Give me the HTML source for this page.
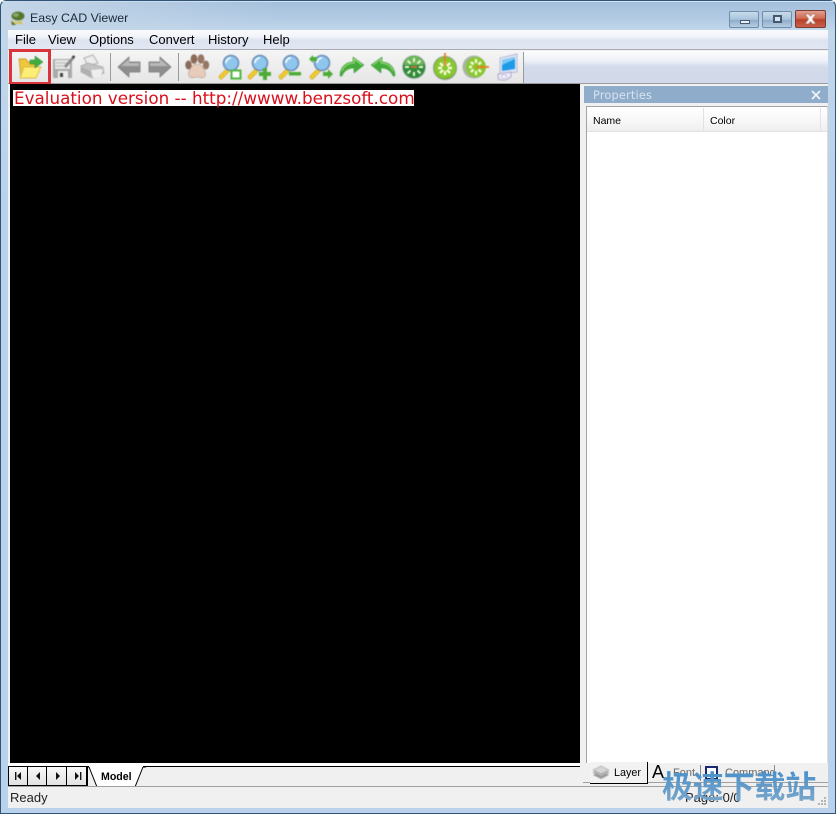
<!DOCTYPE html>
<html><head><meta charset="utf-8">
<style>
*{box-sizing:border-box;margin:0;padding:0}
html,body{width:836px;height:814px;overflow:hidden;background:#fff}
body{position:relative;font-family:"Liberation Sans",sans-serif;color:#000}
.a{position:absolute}
.t{position:absolute;white-space:nowrap}
svg{position:absolute;overflow:visible}
svg.i{filter:blur(.45px)}
</style></head><body>
<div class="a" style="left:0;top:0;width:836px;height:814px;background:linear-gradient(180deg,#a3bfdc 0,#b5cde5 20px,#c3d7ea 30px,#b9d1ea 200px,#b9d1ea 100%);border:1px solid #2f5478;border-radius:6px 6px 0 0"></div>
<div class="a" style="left:1px;top:1px;width:834px;height:1px;background:#d5e3f0"></div>
<div class="a" style="left:0;top:0;width:280px;height:30px;background:linear-gradient(90deg,#c4d6e8,rgba(196,214,232,0));border-radius:6px 0 0 0;margin:1px"></div>

<!-- app icon and title -->
<svg class="i" style="left:10px;top:10px" width="17" height="16" viewBox="0 0 17 16"><ellipse cx="8" cy="6" rx="6.5" ry="4.5" fill="#55752f"/><ellipse cx="6" cy="5" rx="3" ry="2" fill="#8aa765"/><path d="M1 8C4 13 8 13 11 10L13 14H3Z" fill="#d3c263"/><path d="M1 11L6 15H2Z" fill="#4f6a2f"/></svg>
<div class="t" style="left:30px;top:11px;font-size:12.4px;color:#1c2a38">Easy CAD Viewer</div>

<!-- caption buttons -->
<div class="a" style="left:729px;top:11px;width:30px;height:17px;border:1px solid #6f8dab;border-radius:2px;background:linear-gradient(180deg,#c9dbeb 0,#a8c3dc 50%,#8fadca 55%,#b6cde2 100%)"></div>
<div class="a" style="left:740px;top:20px;width:10px;height:4px;background:#e8eff6;border:1px solid #44586e"></div>
<div class="a" style="left:762px;top:11px;width:30px;height:17px;border:1px solid #6f8dab;border-radius:2px;background:linear-gradient(180deg,#c9dbeb 0,#a8c3dc 50%,#8fadca 55%,#b6cde2 100%)"></div>
<div class="a" style="left:773px;top:15px;width:9px;height:8px;background:#d7e3ee;border:2px solid #44586e"></div>
<div class="a" style="left:795px;top:10px;width:31px;height:18px;border:1px solid #7b3b30;border-radius:2px;background:linear-gradient(180deg,#e0a090 0,#cf6b55 45%,#b9412a 55%,#c9604a 100%)"></div>
<svg class="i" style="left:804px;top:14px" width="13" height="10" viewBox="0 0 13 10"><path d="M1 0H4.5L6.5 2.5L8.5 0H12L8.3 5L12 10H8.5L6.5 7.5L4.5 10H1L4.7 5Z" fill="#fff" stroke="#6b2a20" stroke-width=".4"/></svg>

<!-- client area -->
<div class="a" style="left:8px;top:30px;width:820px;height:778px;background:#f0f0f0"></div>

<!-- menu -->
<div class="a" style="left:8px;top:30px;width:820px;height:20px;background:linear-gradient(180deg,#fafbfd 0,#f1f3f9 35%,#dde3f0 50%,#e2e7f3 100%)"></div>
<div class="a" style="left:8px;top:49px;width:820px;height:1px;background:#a9adb3"></div>
<div class="t" style="left:15px;top:32px;font-size:13px;line-height:16px">File</div>
<div class="t" style="left:48px;top:32px;font-size:13px;line-height:16px">View</div>
<div class="t" style="left:89px;top:32px;font-size:13px;line-height:16px">Options</div>
<div class="t" style="left:149px;top:32px;font-size:13px;line-height:16px">Convert</div>
<div class="t" style="left:208px;top:32px;font-size:13px;line-height:16px">History</div>
<div class="t" style="left:263px;top:32px;font-size:13px;line-height:16px">Help</div>

<!-- toolbar -->
<div class="a" style="left:8px;top:50px;width:820px;height:33px;background:#f0f0f0"></div>
<div class="a" style="left:8px;top:50px;width:515px;height:33px;background:linear-gradient(180deg,#f5f5f5,#e6e6e6)"></div>
<div class="a" style="left:524px;top:51px;width:304px;height:32px;background:linear-gradient(180deg,#fbfcfd 0,#eef1f8 30%,#d3daea 50%,#d2d9ea 100%)"></div>
<div class="a" style="left:523px;top:52px;width:1px;height:31px;background:#9a9a9a"></div>
<div class="a" style="left:8px;top:83px;width:820px;height:1px;background:#9b9b9b"></div>
<div class="a" style="left:110px;top:53px;width:1px;height:28px;background:#9a9a9a"></div>
<div class="a" style="left:178px;top:53px;width:1px;height:28px;background:#9a9a9a"></div>

<!-- open (red highlight) -->
<div class="a" style="left:9px;top:49px;width:42px;height:36px;border:3px solid #d9343c"></div>
<svg class="i" style="left:18px;top:54px" width="26" height="26" viewBox="0 0 26 26">
<path d="M1 5H8L10 8H19V14L17 24H3Z" fill="#efc63c" stroke="#c9a030" stroke-width=".9"/><path d="M6 13H23L18 24H2Z" fill="#fdee78" stroke="#dcb83e" stroke-width=".9"/>
<path d="M12 6H17V2L25 8L17 14V10H12Z" fill="#3fae3f" stroke="#2d7d2d" stroke-width=".5"/></svg>
<!-- save gray -->
<svg class="i" style="left:52px;top:54px" width="24" height="26" viewBox="0 0 24 26">
<rect x="1" y="5" width="19" height="19" fill="#a9a9a9"/><rect x="3" y="6" width="15" height="9" fill="#e4e4e4"/><path d="M4 9H15M4 12H13" stroke="#bbb"/><rect x="6" y="17" width="10" height="7" fill="#ececec"/><rect x="8" y="19" width="3" height="4" fill="#444"/>
<path d="M12 12L20 3L22 5L14 14Z" fill="#8a8a8a"/><circle cx="21.5" cy="3" r="1.5" fill="#444"/></svg>
<!-- print gray -->
<svg class="i" style="left:79px;top:54px" width="28" height="26" viewBox="0 0 28 26">
<path d="M5 4L14 1L19 9L9 12Z" fill="#ececec" stroke="#b0b0b0"/><path d="M2 12L9 9L24 13L25 19L14 24L2 18Z" fill="#c2c2c2" stroke="#a5a5a5" stroke-width=".7"/><path d="M12 16L24 15L22 22L14 24Z" fill="#eeeeee"/><path d="M2 13L12 17V24L2 18Z" fill="#b0b0b0"/></svg>
<!-- back / forward gray -->
<svg class="i" style="left:117px;top:55px" width="24" height="24" viewBox="0 0 24 24"><path d="M1 12L12 2V7H23V17H12V22Z" fill="#8e8e8e" stroke="#777" stroke-width=".7"/><path d="M3 12L12 4V8H22V11H5Z" fill="#b9b9b9"/></svg>
<svg class="i" style="left:148px;top:55px" width="24" height="24" viewBox="0 0 24 24"><path d="M23 12L12 2V7H1V17H12V22Z" fill="#8e8e8e" stroke="#777" stroke-width=".7"/><path d="M21 12L12 4V8H2V11H19Z" fill="#b9b9b9"/></svg>
<!-- paw -->
<svg class="i" style="left:184px;top:53px" width="26" height="28" viewBox="0 0 26 28">
<ellipse cx="4.5" cy="12" rx="3.2" ry="4.5" fill="#8a6a58"/><ellipse cx="10" cy="6" rx="3.4" ry="4.8" fill="#8a6a58"/><ellipse cx="17" cy="6" rx="3.4" ry="4.8" fill="#967664"/><ellipse cx="22" cy="12" rx="3.2" ry="4.5" fill="#967664"/>
<path d="M13 11C18 11 23 19 21 23C19 26 16 24 13 24C10 24 7 26 5 23C3 19 8 11 13 11Z" fill="#e8ccbb" stroke="#b39582" stroke-width=".6"/></svg>
<!-- zoom icons -->
<svg class="i" style="left:217px;top:54px" width="26" height="27" viewBox="0 0 26 27">
<path d="M2 22L10 14L13 17L5 25Q2 26 2 22Z" fill="#efc92c" stroke="#b8961a" stroke-width=".5"/><circle cx="14" cy="9" r="7.5" fill="#8fc6ee" stroke="#6b8fb8" stroke-width="1.6"/><path d="M9 9A5 5 0 0 1 14 4" stroke="#fff" stroke-width="1.6" fill="none"/>
<rect x="14.5" y="16.5" width="9" height="8" fill="#fff" stroke="#4fb83c" stroke-width="2"/></svg>
<svg class="i" style="left:246px;top:54px" width="26" height="27" viewBox="0 0 26 27">
<path d="M2 22L10 14L13 17L5 25Q2 26 2 22Z" fill="#efc92c" stroke="#b8961a" stroke-width=".5"/><circle cx="14" cy="9" r="7.5" fill="#8fc6ee" stroke="#6b8fb8" stroke-width="1.6"/><path d="M9 9A5 5 0 0 1 14 4" stroke="#fff" stroke-width="1.6" fill="none"/>
<path d="M17 14H21V18H25V22H21V26H17V22H13V18H17Z" fill="#4dac37"/></svg>
<svg class="i" style="left:277px;top:54px" width="26" height="27" viewBox="0 0 26 27">
<path d="M2 22L10 14L13 17L5 25Q2 26 2 22Z" fill="#efc92c" stroke="#b8961a" stroke-width=".5"/><circle cx="14" cy="9" r="7.5" fill="#8fc6ee" stroke="#6b8fb8" stroke-width="1.6"/><path d="M9 9A5 5 0 0 1 14 4" stroke="#fff" stroke-width="1.6" fill="none"/>
<rect x="12" y="18" width="12" height="3.5" fill="#4dac37"/></svg>
<svg class="i" style="left:308px;top:54px" width="26" height="27" viewBox="0 0 26 27">
<path d="M2 22L10 14L13 17L5 25Q2 26 2 22Z" fill="#efc92c" stroke="#b8961a" stroke-width=".5"/><circle cx="14" cy="9" r="7.5" fill="#8fc6ee" stroke="#6b8fb8" stroke-width="1.6"/><path d="M9 9A5 5 0 0 1 14 4" stroke="#fff" stroke-width="1.6" fill="none"/>
<path d="M1 5L5 1L5 3H9V7H5V9Z" fill="#4dac37"/><path d="M25 20L20 15V18H15V22H20V25Z" fill="#4dac37"/></svg>
<!-- redo / undo -->
<svg class="i" style="left:339px;top:55px" width="26" height="24" viewBox="0 0 26 24"><path d="M1 21C1 12 7 7 14 7V2L25 10L15 18V13C9 13 5 16 3 21Z" fill="#42ad38" stroke="#2f8a2c" stroke-width=".5"/><path d="M3 16C5 11 9 8 15 8V4L23 10" stroke="#a4e07e" stroke-width="1" fill="none"/></svg>
<svg class="i" style="left:370px;top:55px" width="26" height="24" viewBox="0 0 26 24"><path d="M25 21C25 12 19 7 12 7V2L1 10L11 18V13C17 13 21 16 23 21Z" fill="#42ad38" stroke="#2f8a2c" stroke-width=".5"/><path d="M23 16C21 11 17 8 11 8V4L3 10" stroke="#a4e07e" stroke-width="1" fill="none"/></svg>
<!-- green wheels -->
<svg class="i" style="left:402px;top:55px" width="24" height="24" viewBox="0 0 24 24"><circle cx="12" cy="12" r="11.5" fill="#2f8a3c" stroke="#a9b5ac" stroke-width=".8"/><path d="M2 10A10 9 0 0 1 22 10Z" fill="#6cb65a"/><g stroke="#eef8d4" stroke-width="2"><path d="M12 3V7M12 17V21M3 12H7M17 12H21M5.6 5.6L8.5 8.5M15.5 15.5L18.4 18.4M18.4 5.6L15.5 8.5M8.5 15.5L5.6 18.4"/></g><path d="M9 12H15" stroke="#e8742c" stroke-width="1.6"/></svg>
<svg class="i" style="left:433px;top:53px" width="24" height="27" viewBox="0 0 24 27"><circle cx="12" cy="15" r="11.5" fill="#86c82e" stroke="#8c9a80" stroke-width="1"/><path d="M3 21A11.5 11.5 0 0 0 22 20A12 12 0 0 1 3 21Z" fill="#4a7a28"/><g stroke="#f8fcdc" stroke-width="2.4"><path d="M12 8V12M12 18V22M5 15H9M15 15H19M7 10L10 13M14 17L17 20M17 10L14 13M10 17L7 20"/></g><path d="M12 0V13" stroke="#ea7b20" stroke-width="1.8"/></svg>
<svg class="i" style="left:463px;top:55px" width="26" height="24" viewBox="0 0 26 24"><circle cx="11" cy="12" r="11.5" fill="#a8b4a0"/><circle cx="13" cy="12" r="10" fill="#86c82e"/><g stroke="#f8fcdc" stroke-width="2.4"><path d="M13 4V8M13 16V20M6 12H9M8 7L10.5 9.5M15.5 14.5L18 17M18 7L15.5 9.5M10.5 14.5L8 17"/></g><path d="M13 12H26" stroke="#ea7b20" stroke-width="1.8"/></svg>
<!-- monitor -->
<svg class="i" style="left:497px;top:53px" width="22" height="28" viewBox="0 0 22 28"><path d="M3 5L20 1V19L3 21Z" fill="#dfe4f4" stroke="#a8aed0" stroke-width=".8"/><path d="M5 7L18 4V16L5 18Z" fill="#1e9ae8"/><path d="M5 7L18 4V6L5 12Z" fill="#7cc8f4"/><path d="M1 21L14 19V24L9 27H4Q1 27 1 24Z" fill="#ece8f6" stroke="#a39ac8" stroke-width=".8"/><ellipse cx="7" cy="23.5" rx="2.5" ry="1.6" fill="#fff" stroke="#a39ac8" stroke-width=".6"/></svg>

<!-- canvas -->
<div class="a" style="left:8px;top:84px;width:574px;height:680px;background:#000;border-left:2px solid #f0f0f0"></div>
<div class="a" style="left:13px;top:90px;width:401px;height:16px;background:#fff"></div>
<div class="t" style="left:14px;top:89px;font-size:16.78px;line-height:19px;color:#d8101c;font-family:'DejaVu Sans',sans-serif">Evaluation version -- http://wwww.benzsoft.com</div>
<div class="a" style="left:580px;top:84px;width:248px;height:703px;background:#f0f0f0"></div>
<div class="a" style="left:8px;top:763px;width:572px;height:3px;background:#fff"></div>

<!-- properties panel -->
<div class="a" style="left:584px;top:86px;width:244px;height:17px;background:#8faccb"></div>
<div class="t" style="left:593px;top:88px;line-height:15px;letter-spacing:.2px;color:#d8e4f0;font-family:'DejaVu Sans',sans-serif;font-size:11.3px">Properties</div>
<svg style="left:811px;top:90px" width="10" height="10" viewBox="0 0 10 10"><path d="M1 1L9 9M9 1L1 9" stroke="#f1f5fa" stroke-width="1.6"/></svg>
<div class="a" style="left:586px;top:106px;width:242px;height:657px;background:#fff;border:1px solid #a3a3a3;border-bottom:0;border-right:1px solid #dcdcdc"></div>
<div class="a" style="left:587px;top:107px;width:240px;height:25px;background:linear-gradient(180deg,#fff 0,#f8f8f8 55%,#efefef 100%);border-bottom:1px solid #e2e2e2"></div>
<div class="a" style="left:703px;top:108px;width:1px;height:23px;background:#e2e2e2"></div>
<div class="a" style="left:820px;top:108px;width:1px;height:23px;background:#e2e2e2"></div>
<div class="t" style="left:593px;top:114px;font-size:10.5px;line-height:14px">Name</div>
<div class="t" style="left:710px;top:114px;font-size:10.5px;line-height:14px">Color</div>

<!-- sheet tabs -->
<div class="a" style="left:8px;top:766px;width:572px;height:21px;background:#f0f0f0;border-top:1px solid #000"></div>
<div class="a" style="left:8px;top:766px;width:80px;height:21px;background:#000"></div>
<div class="a" style="left:9px;top:767px;width:18px;height:18px;background:linear-gradient(#f8f8f8,#e2e2e2)"></div>
<div class="a" style="left:28px;top:767px;width:18px;height:18px;background:linear-gradient(#f8f8f8,#e2e2e2)"></div>
<div class="a" style="left:47px;top:767px;width:19px;height:18px;background:linear-gradient(#f8f8f8,#e2e2e2)"></div>
<div class="a" style="left:67px;top:767px;width:19px;height:18px;background:linear-gradient(#f8f8f8,#e2e2e2)"></div>
<svg style="left:9px;top:767px" width="78" height="18" viewBox="0 0 78 18" fill="#111">
<rect x="6" y="5" width="1.4" height="8"/><path d="M12 5V13L8 9Z"/><path d="M31 5V13L27 9Z"/><path d="M47 5V13L51 9Z"/><path d="M66 5V13L70 9Z"/><rect x="71" y="5" width="1.4" height="8"/></svg>
<svg style="left:86px;top:765px" width="60" height="24" viewBox="0 0 60 24"><path d="M2 2L11 22H49L58 2" fill="#fff"/><path d="M0 2H3L11 22H49L57 2H60" fill="none" stroke="#000"/><rect x="3" y="0" width="54" height="2" fill="#fff"/></svg>
<div class="t" style="left:101px;top:770px;font-size:10.6px;font-weight:bold;line-height:14px">Model</div>

<!-- right panel tabs -->
<div class="a" style="left:583px;top:782px;width:245px;height:1px;background:#a0a0a0"></div>
<div class="a" style="left:590px;top:762px;width:58px;height:22px;background:#f2f2f2;border-right:1px solid #000;border-bottom:1px solid #000"></div>
<svg class="i" style="left:592px;top:766px" width="18" height="14" viewBox="0 0 18 14"><path d="M1 9L9 5L17 9L9 13Z" fill="#9a9a9a"/><path d="M1 6.5L9 2.5L17 6.5L9 10.5Z" fill="#b8b8b8" stroke="#8a8a8a" stroke-width=".5"/><path d="M1 4L9 0L17 4L9 8Z" fill="#d6d6d6" stroke="#8a8a8a" stroke-width=".5"/></svg>
<div class="t" style="left:614px;top:766px;font-size:10.8px;line-height:14px">Layer</div>
<div class="t" style="left:652px;top:762px;font-size:18px;line-height:20px">A</div>
<div class="t" style="left:673px;top:766px;font-size:11px;line-height:14px;color:#666">Font</div>
<div class="a" style="left:700px;top:765px;width:1px;height:16px;background:#8a8a8a"></div>
<div class="a" style="left:705px;top:766px;width:13px;height:14px;border:2px solid #1a2a70;background:#fff"></div>
<div class="t" style="left:725px;top:766px;font-size:11px;line-height:14px;color:#666">Command</div>
<div class="a" style="left:774px;top:765px;width:1px;height:16px;background:#8a8a8a"></div>

<!-- status bar -->
<div class="a" style="left:8px;top:786px;width:820px;height:22px;background:#f0f0f0;border-top:1px solid #a0a0a0"></div>
<div class="t" style="left:10px;top:790px;font-size:13px;line-height:16px;color:#222">Ready</div>
<div class="t" style="left:685px;top:790px;font-size:13px;line-height:16px;color:#222">Page: 0/0</div>
<svg style="left:815px;top:796px" width="12" height="11" viewBox="0 0 12 11" fill="#b5b5b5"><rect x="9" y="1" width="2" height="2"/><rect x="6" y="4" width="2" height="2"/><rect x="9" y="4" width="2" height="2"/><rect x="3" y="7" width="2" height="2"/><rect x="6" y="7" width="2" height="2"/><rect x="9" y="7" width="2" height="2"/></svg>

<!-- watermark -->
<div class="t" style="left:662px;top:765px;font-size:31px;line-height:40px;font-weight:bold;letter-spacing:-.2px;font-family:'Noto Sans CJK SC',sans-serif;background:linear-gradient(180deg,#3f8ccb,#7fa8c9);-webkit-background-clip:text;background-clip:text;color:transparent">极速下载站</div>
</body></html>
